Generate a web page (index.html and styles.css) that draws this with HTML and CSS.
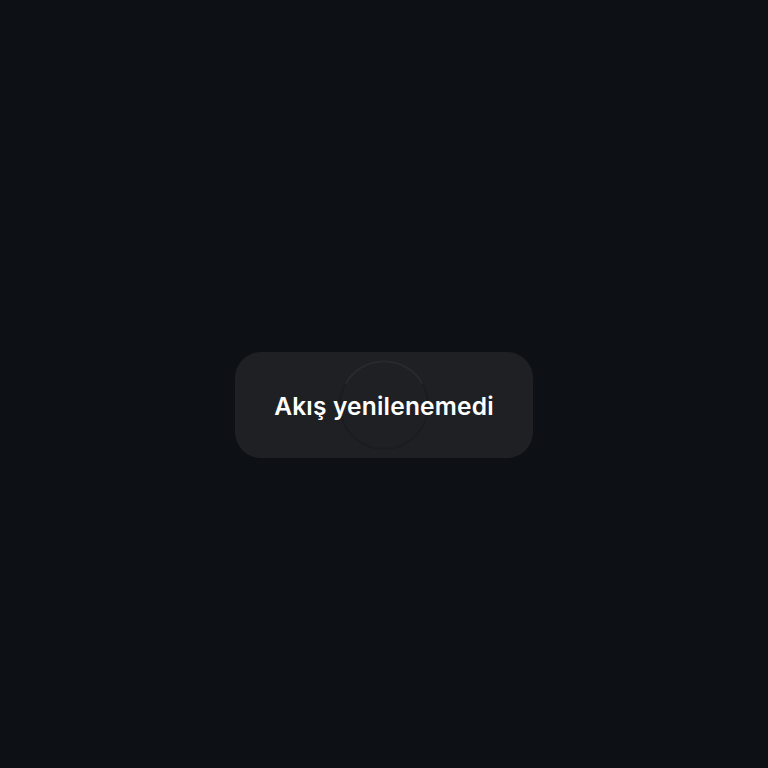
FILE: index.html
```html
<!DOCTYPE html>
<html lang="tr">
<head>
<meta charset="utf-8">
<link rel="stylesheet" href="styles.css">
</head>
<body>
<div class="page">
  <div class="toast">
    <svg class="spinner" width="92" height="92" viewBox="0 0 92 92">
      <circle cx="46" cy="46" r="44" fill="none" stroke="#1b1c20" stroke-width="2"/>
      <path d="M 8 24 A 44 44 0 0 1 84 24" fill="none" stroke="#292a2f" stroke-width="2" stroke-linecap="round"/>
    </svg>
    <span class="msg">Akış yenilenemedi</span>
  </div>
</div>
</body>
</html>
```
FILE: styles.css
```css
html, body {
  margin: 0;
  padding: 0;
  background: #0d1015;
}
.page {
  width: 768px;
  height: 768px;
  display: flex;
  flex-direction: column;
  align-items: center;
  padding-top: 352px;
  box-sizing: border-box;
}
.toast {
  position: relative;
  width: 298px;
  height: 106px;
  border-radius: 26px;
  background: #1f2024;
  display: flex;
  align-items: center;
  justify-content: center;
  overflow: hidden;
}
.spinner {
  position: absolute;
  left: 103px;
  top: 7px;
}
.msg {
  position: relative;
  top: 1px;
  font-family: Inter, "Noto Sans", sans-serif;
  font-weight: 600;
  font-size: 24.5px;
  color: #ffffff;
  letter-spacing: 0.2px;
}
```
